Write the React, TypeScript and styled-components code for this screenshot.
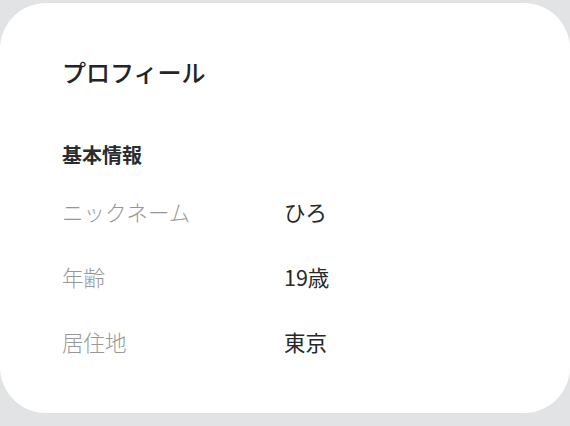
import React from 'react';
import styled, { createGlobalStyle } from 'styled-components';

const GlobalStyle = createGlobalStyle`
  html, body {
    margin: 0;
    padding: 0;
    background: #e2e3e4;
  }
  body {
    font-family: "Noto Sans CJK JP", "Noto Sans", sans-serif;
  }
`;

const Page = styled.div`
  width: 570px;
  height: 426px;
  padding-top: 3px;
  box-sizing: border-box;
  overflow: hidden;
`;

const Card = styled.section`
  height: 410px;
  background: #ffffff;
  border-radius: 46px;
  padding: 53px 62px 0;
  box-sizing: border-box;
`;

const Title = styled.h1`
  margin: 0;
  font-size: 24px;
  line-height: 32px;
  font-weight: 500;
  color: #222528;
`;

const SectionTitle = styled.h2`
  margin: 53px 0 0;
  font-size: 20px;
  line-height: 28px;
  font-weight: 700;
  color: #2a2c2e;
`;

const List = styled.dl`
  margin: 28px 0 0;
  display: grid;
  grid-template-columns: 222px 1fr;
  row-gap: 35px;
`;

const Label = styled.dt`
  margin: 0;
  font-size: 21.5px;
  line-height: 30px;
  font-weight: 300;
  color: #979797;
`;

const Value = styled.dd`
  margin: 0;
  font-size: 21.5px;
  line-height: 30px;
  font-weight: 400;
  color: #26282a;
`;

const rows = [
  { label: 'ニックネーム', value: 'ひろ' },
  { label: '年齢', value: '19歳' },
  { label: '居住地', value: '東京' },
];

export default function App() {
  return (
    <Page>
      <GlobalStyle />
      <Card>
        <Title>プロフィール</Title>
        <SectionTitle>基本情報</SectionTitle>
        <List>
          {rows.map((r) => (
            <React.Fragment key={r.label}>
              <Label>{r.label}</Label>
              <Value>{r.value}</Value>
            </React.Fragment>
          ))}
        </List>
      </Card>
    </Page>
  );
}
